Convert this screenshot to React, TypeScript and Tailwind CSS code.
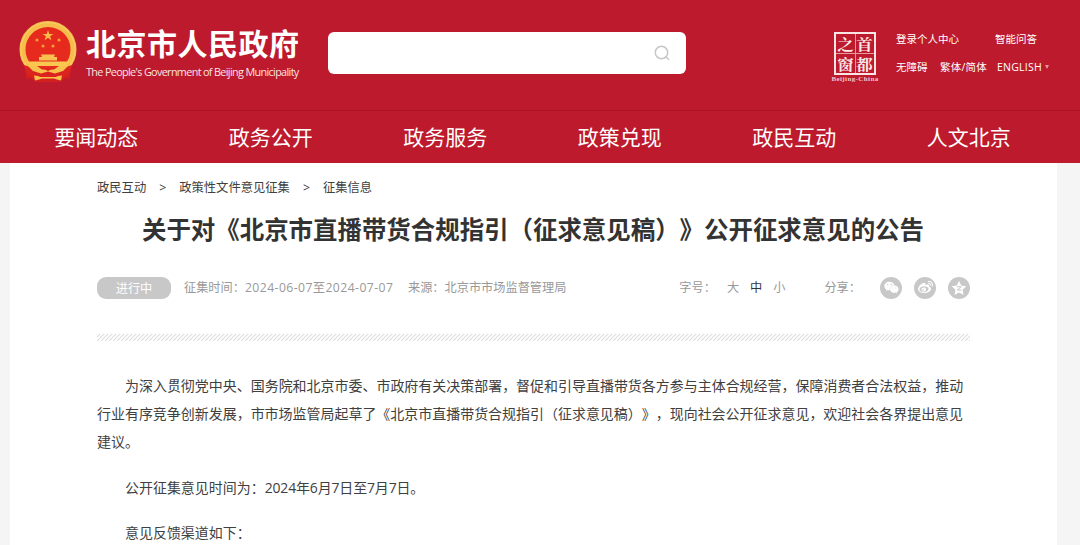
import { FaWeixin, FaWeibo } from 'react-icons/fa';

const navItems = ['要闻动态', '政务公开', '政务服务', '政策兑现', '政民互动', '人文北京'];

function Emblem() {
  return (
    <svg className="w-[60px] h-[62px] shrink-0" viewBox="0 0 60 62">
      {/* Ribbon */}
      <path d="M8 44 L8 57 L14 58 L18 61 L42 61 L46 58 L52 57 L52 44Z" fill="#d3201f" />
      <circle cx="30" cy="28.500" r="25.500" fill="#e62a1d" stroke="#f6bd4a" strokeWidth="6" />
      <circle cx="30" cy="28.500" r="27" fill="none" stroke="#f9cf6c" strokeWidth="1" />
      {/* Stars */}
      <path d="M30 9l1.300 3.900h4.100l-3.300 2.400 1.300 3.900-3.400-2.400-3.400 2.400 1.300-3.900-3.300-2.400h4.100z" fill="#f8bd45" />
      <g fill="#f39a3a">
        <circle cx="19" cy="19" r="1.600" />
        <circle cx="41" cy="19" r="1.600" />
        <circle cx="25" cy="25" r="1.600" />
        <circle cx="35" cy="25" r="1.600" />
      </g>
      {/* Gate */}
      <path d="M23 33.500h14l-1 2.500H24zM21 36h18v3.500H21z" fill="#f9c050" />
      <path d="M8 40.500h44l-3 4.500H11z" fill="#f9c650" />
      {/* Gear and drapery */}
      <path d="M6 44 L14 46.500 L22 47 L30 49 L38 47 L46 46.500 L54 44 L52 52 L44 57 L16 57 L8 52Z" fill="#dc241e" />
      <path d="M10 45h9l5 3.500h12l5-3.500h9l-5 5-8 2.500-7-2-7 2-8-2.500z" fill="#f8c04c" />
      <path d="M25 47.500h10l-5 2.500z" fill="#dc241e" />
      <path d="M16 54.500l4 .5 2 1h16l2-1 4-.5-1 5-4-1-3-1H24l-3 1-4 1z" fill="#f8c04c" />
    </svg>
  );
}

function Seal() {
  return (
    <div className="flex w-12 flex-col items-center">
      <div className="grid h-[43px] w-[42px] grid-cols-2 grid-rows-2 gap-px border-2 border-[#fbe4e4] bg-[#e79aa0] font-['Noto_Serif_CJK_SC','Noto_Sans_CJK_SC',serif] text-[15px] font-bold leading-[19px] text-[#fbe9e9]">
        {['之', '首', '窗', '都'].map((char) => (
          <span key={char} className="flex items-center justify-center bg-[#bd1a2d]">
            <span className="block h-[19px] scale-x-110">{char}</span>
          </span>
        ))}
      </div>
      <span className="mt-px whitespace-nowrap font-['Liberation_Serif',serif] text-[7px] font-bold leading-[7px] tracking-[0.4px] text-[#f3c6c9]">
        Beijing-China
      </span>
    </div>
  );
}

function Header() {
  return (
    <header className="bg-[#bd1a2d] text-white">
      <div className="flex h-[110px] items-start">
        <div className="ml-[18px] mt-[21px] flex">
          <Emblem />
          <div className="ml-2 w-[222px] whitespace-nowrap">
            <h1 className="mt-1 text-[30px] font-bold leading-[38px] tracking-[0.5px]">北京市人民政府</h1>
            <p className="mt-px text-[10.8px] leading-[16px] tracking-[-0.64px] text-[#fbe4e6]">
              The People's Government of Beijing Municipality
            </p>
          </div>
        </div>
        <div className="ml-[20px] mt-8 flex h-[42px] w-[358px] items-center justify-end rounded-[6px] bg-white pr-4">
          <svg className="h-4 w-4" viewBox="0 0 16 16" fill="none" stroke="#c6c6c6" strokeWidth="1.500">
            <circle cx="7.500" cy="7.500" r="6.200" />
            <path d="M11.500 11.500l3.500 3.300" />
          </svg>
        </div>
        <div className="ml-[145px] mt-8">
          <Seal />
        </div>
        <div className="ml-[17px] mt-[30px] whitespace-nowrap text-[10.5px] leading-[18px]">
          <div className="flex">
            <span className="w-[99px]">登录个人中心</span>
            <span>智能问答</span>
          </div>
          <div className="mt-[10px] flex">
            <span className="w-11">无障碍</span>
            <span className="w-[57px] tracking-[0.2px]">繁体/简体</span>
            <span className="tracking-[0.25px]">ENGLISH</span>
            <span className="ml-[3px] mt-[7px] h-0 w-0 border-x-[2.5px] border-t-4 border-x-transparent border-t-[#e6969d]" />
          </div>
        </div>
      </div>
      <nav className="h-[53px] border-t border-[#a81426]">
        <ul className="ml-[9px] grid h-[52px] w-[1047px] grid-cols-6 text-center text-[21px] leading-[53px]">
          {navItems.map((item) => (
            <li key={item}>{item}</li>
          ))}
        </ul>
      </nav>
    </header>
  );
}

function ShareButtons() {
  return (
    <div className="flex gap-3 text-white">
      <span className="flex h-[22px] w-[22px] items-center justify-center rounded-full bg-[#c8c8c8]">
        <FaWeixin size={15} />
      </span>
      <span className="flex h-[22px] w-[22px] items-center justify-center rounded-full bg-[#c8c8c8]">
        <FaWeibo size={15} />
      </span>
      <span className="flex h-[22px] w-[22px] items-center justify-center rounded-full bg-[#c8c8c8]">
        <svg className="h-4 w-4" viewBox="0 0 16 16">
          <path d="M8 .8l2.200 4.700 5.100.7-3.700 3.600.9 5.200L8 12.500 3.500 15l.9-5.200L.7 6.200l5.100-.7z" fill="#fff" />
          <path d="M5.800 6.800h4.400L6.200 10h4.300" fill="none" stroke="#c8c8c8" strokeWidth="1" />
        </svg>
      </span>
    </div>
  );
}

export default function App() {
  return (
    <div lang="zh-CN" className="h-[545px] w-[1080px] overflow-hidden bg-[#f5f5f5] font-['Open_Sans','Noto_Sans_CJK_SC',sans-serif] [text-spacing-trim:space-all]">
      <Header />
      <main className="ml-[10px] h-[382px] w-[1047px] bg-white pl-[87px] pt-[15px] text-[#404040]">
        <div className="flex whitespace-nowrap text-[12.3px] leading-[20px]">
          <span>政民互动</span>
          <span className="w-[33px] text-center">&gt;</span>
          <span>政策性文件意见征集</span>
          <span className="w-[33px] text-center">&gt;</span>
          <span>征集信息</span>
        </div>

        <h2 className="mt-[14px] w-[872px] whitespace-nowrap text-center text-[24.45px] font-bold leading-[36px] text-[#333]">
          关于对《北京市直播带货合规指引（征求意见稿）》公开征求意见的公告
        </h2>

        {/* Meta row */}
        <div className="mt-7 flex h-[23px] w-[873px] items-center whitespace-nowrap text-[12.2px] leading-[22px] text-[#999]">
          <span className="h-[22px] w-[74px] rounded-[9px] bg-[#c8c8c8] text-center leading-[23px] text-white">进行中</span>
          <span className="ml-[13px] w-[224px] pt-px">
            征集时间：<span className="tracking-[0.43px]">2024-06-07至2024-07-07</span>
          </span>
          <span className="pt-px">来源：北京市市场监督管理局</span>
          <span className="ml-auto pt-px">字号：</span>
          <span className="ml-[11px] pt-px">大</span>
          <span className="ml-[11px] pt-px text-[#333]">中</span>
          <span className="ml-[11px] pt-px">小</span>
          <span className="ml-[39px] mr-[19px] pt-px">分享：</span>
          <ShareButtons />
        </div>

        {/* Hatched divider */}
        <svg className="mt-[35px] block h-[7px] w-[873px]">
          <defs>
            <pattern id="hatch" width="4" height="7" patternUnits="userSpaceOnUse">
              <path d="M-4 7L3 0M0 7L7 0M-8 7L-1 0" stroke="#dedede" strokeWidth="1.100" />
            </pattern>
          </defs>
          <rect width="873" height="7" fill="url(#hatch)" />
        </svg>

        <article className="mt-[31px] w-[873px] text-[13.97px] leading-[28px]">
          <p className="indent-[28px]">
            为深入贯彻党中央、国务院和北京市委、市政府有关决策部署，督促和引导直播带货各方参与主体合规经营，保障消费者合法权益，推动
            <br />
            行业有序竞争创新发展，市市场监管局起草了《北京市直播带货合规指引（征求意见稿）》，现向社会公开征求意见，欢迎社会各界提出意见
            <br />
            建议。
          </p>
          <p className="mt-[18px] indent-[28px]">
            公开征集意见时间为：<span className="tracking-[-0.15px]">2024年6月7日至7月7日。</span>
          </p>
          <p className="mt-[17px] indent-[28px]">意见反馈渠道如下：</p>
        </article>
      </main>
    </div>
  );
}
